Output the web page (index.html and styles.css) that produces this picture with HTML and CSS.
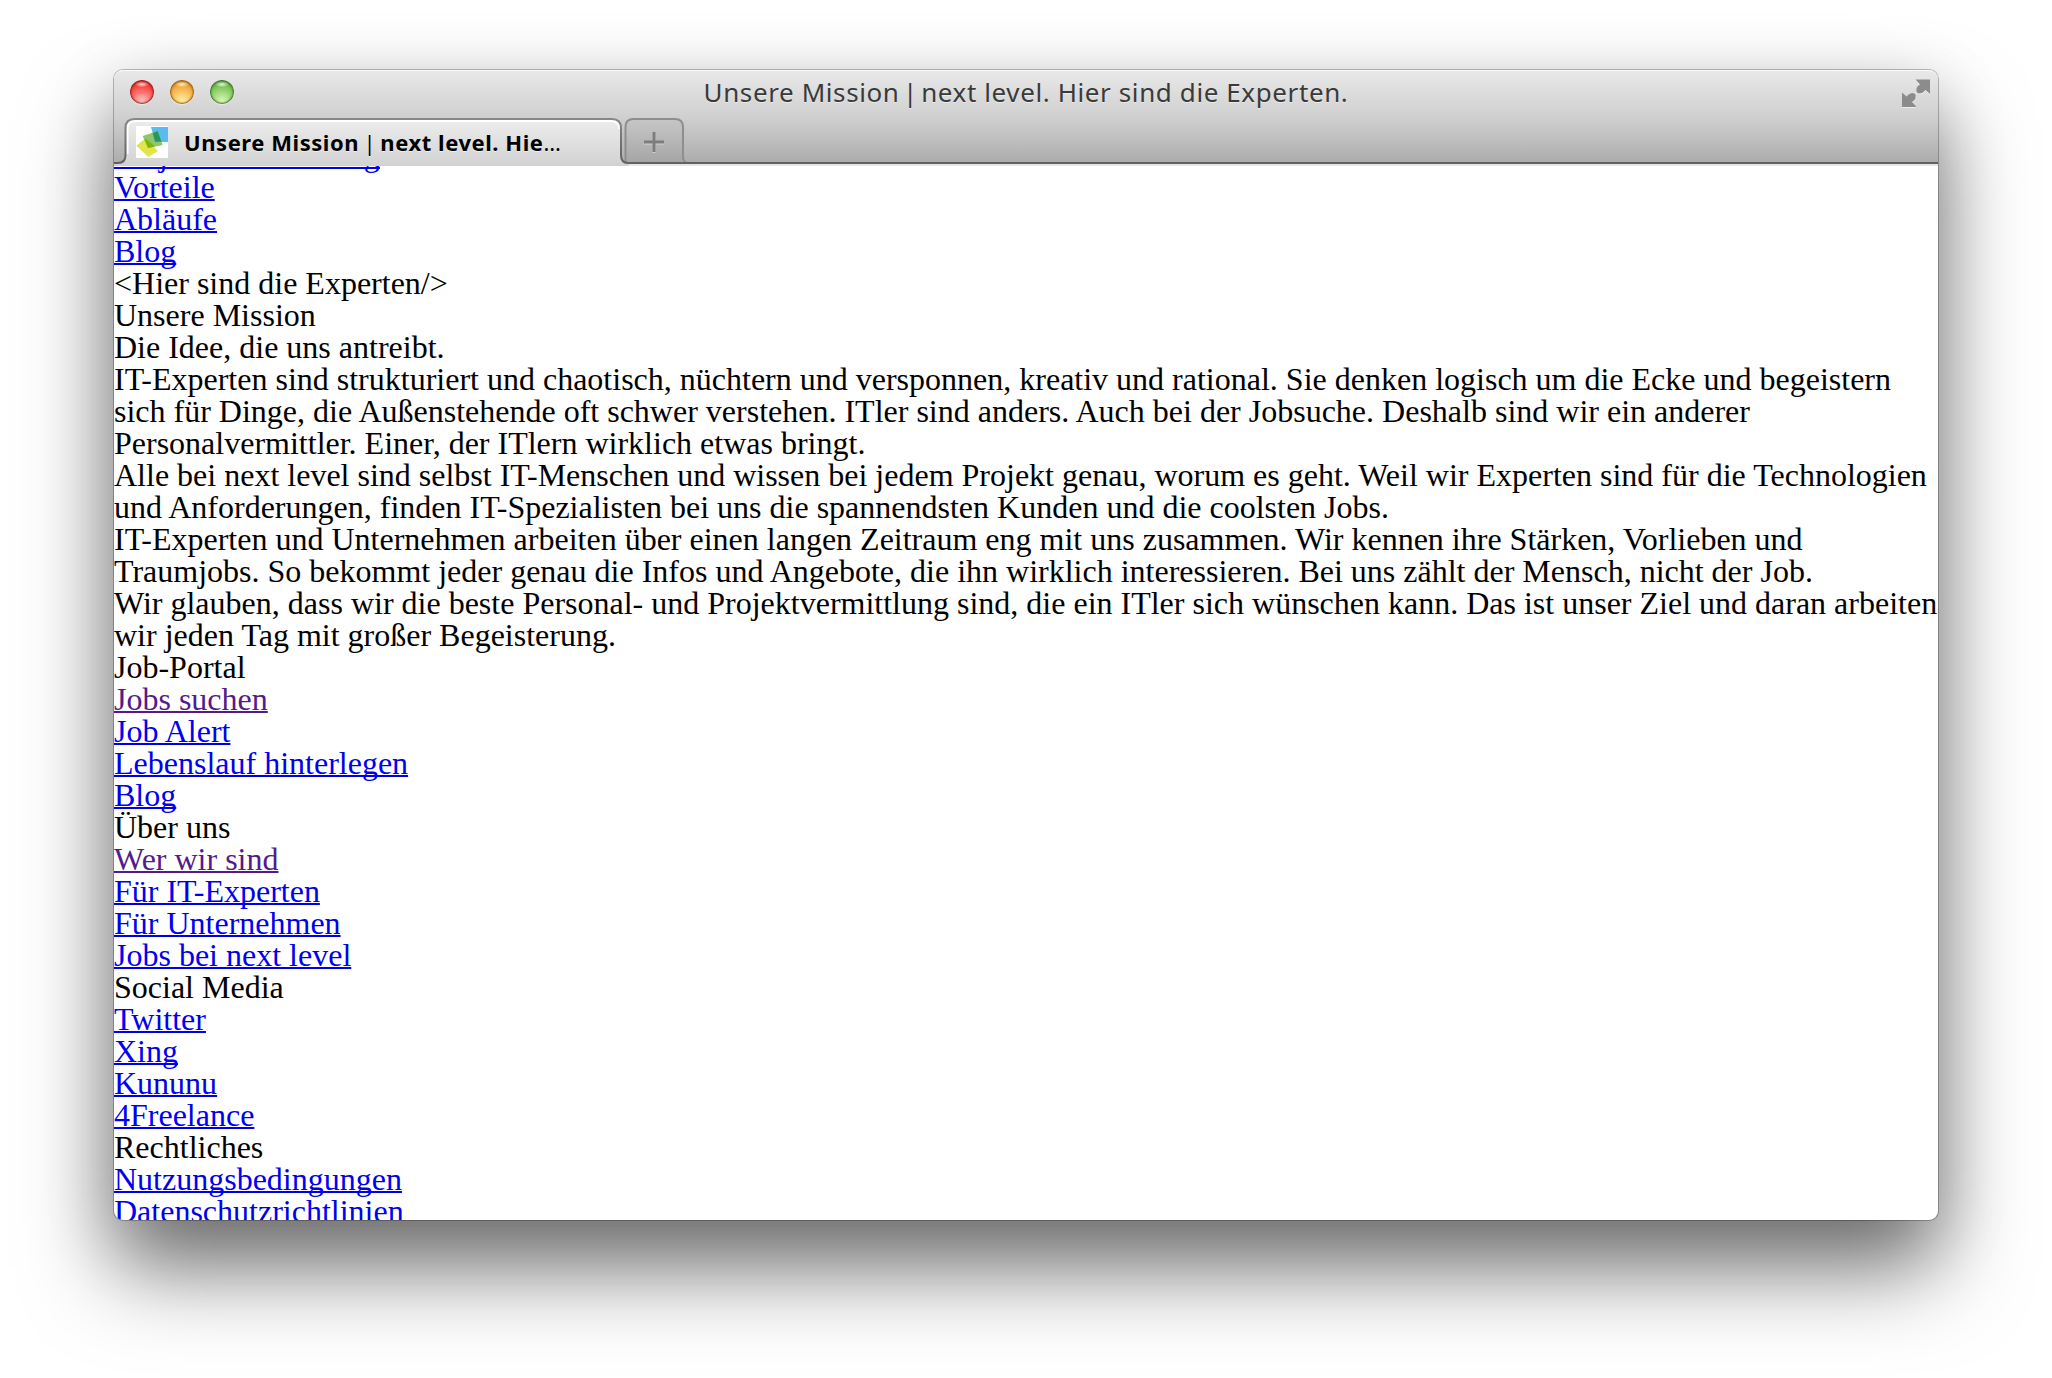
FILE: index.html
```html
<!DOCTYPE html>
<html lang="de">
<head>
<meta charset="utf-8">
<title>Unsere Mission | next level. Hier sind die Experten.</title>
<link rel="stylesheet" href="styles.css">
</head>
<body>
<div class="window">
  <header class="chrome">
    <svg class="chrome-lines" width="1824" height="96" viewBox="0 0 1824 96" fill="none">
      <defs>
        <linearGradient id="tab" x1="0" y1="49" x2="0" y2="96" gradientUnits="userSpaceOnUse"><stop offset="0" stop-color="#ededed"/><stop offset="1" stop-color="#d2d2d2"/></linearGradient>
        <linearGradient id="edge" x1="0" y1="48" x2="0" y2="94" gradientUnits="userSpaceOnUse"><stop offset="0" stop-color="#888"/><stop offset="1" stop-color="#606060"/></linearGradient>
      </defs>
      <path d="M0 94H1824V96H0Z" fill="#e6e6e6"/>
      <path d="M511.500 93V57Q511.500 49 519.500 49H561Q569 49 569 57V87Q569 93 575 93" fill="#000" fill-opacity=".035" stroke="#8e8e8e" stroke-width="2"/>
      <path d="M0 96V93H4Q12 93 12 85V58Q12 49 21 49H498Q507 49 507 58V85Q507 94 515 94V96Z" fill="url(#tab)"/>
      <path d="M13.500 84V59Q13.500 51 22 51H497Q505 51 505 59" stroke="#fff" stroke-width="2"/>
      <path d="M0 93H4Q11.500 93 11.500 85V58Q11.500 49 20.500 49H498Q507 49 507 58V85Q507 93 514 93H1824" stroke="url(#edge)" stroke-width="2"/>
    </svg>
    <div class="titlebar">
      <div class="lights">
        <span class="light red"></span><span class="light yellow"></span><span class="light green"></span>
      </div>
      <div class="title">Unsere Mission <span class="bar">|</span> next level. Hier sind die Experten.</div>
      <svg class="fullscreen" width="28" height="29" viewBox="0 0 28 29"><path d="M13.500 .5H28V15L23.500 11Q20.500 14.500 17 14.500Q13.500 13.500 14.500 10.500Q14 8 18 5.500ZM0 13.500L4.500 17.500Q7.500 14 11 14Q14.500 15 13.500 18Q14 20.500 10 23L14.500 28H0Z"/></svg>
    </div>
    <div class="tabs">
      <div class="tab">
        <svg width="32" height="32" viewBox="0 0 32 32">
          <path d="M0 0H32V32H0Z" fill="#fff"/>
          <path d="M15 1H32V16H19Z" fill="#58bdee"/>
          <path d="M.3 19.700L9 12.700L22 25L12.300 31Z" fill="#dfe54b"/>
          <path d="M6.700 10L21.700 5L26.700 19L12 22Z" fill="#8dc66c"/>
          <path d="M16.700 7L21.700 5L25.500 15.800H19Z" fill="#2c9460"/>
          <path d="M8.500 13.500L10 13L19 20.600L12 22Z" fill="#7fb400"/>
        </svg>
        <span class="tab-label">Unsere Mission <span class="bar">|</span> next level. Hie<span class="dots">…</span></span>
      </div>
      <svg class="plus" width="20" height="20" viewBox="0 0 20 20"><path d="M8.500 0H11.500V8.500H20V11.500H11.500V20H8.500V11.500H0V8.500H8.500Z"/></svg>
    </div>
  </header>
  <main class="page">
    <div class="scrolled">
      <ul>
        <li><a href="#" class="first">Projektbeschreibung</a></li>
        <li><a href="#">Vorteile</a></li>
        <li><a href="#">Abläufe</a></li>
        <li><a href="#">Blog</a></li>
      </ul>
      <p>&lt;Hier sind die Experten/&gt;</p>
      <h1>Unsere Mission</h1>
      <h2>Die Idee, die uns antreibt.</h2>
      <p>IT-Experten sind strukturiert und chaotisch, nüchtern und versponnen, kreativ und rational. Sie denken logisch um die Ecke und begeistern sich für Dinge, die Außenstehende oft schwer verstehen. ITler sind anders. Auch bei der Jobsuche. Deshalb sind wir ein anderer Personalvermittler. Einer, der ITlern wirklich etwas bringt.</p>
      <p>Alle bei next level sind selbst IT-Menschen und wissen bei jedem Projekt genau, worum es geht. Weil wir Experten sind für die Technologien und Anforderungen, finden IT-Spezialisten bei uns die spannendsten Kunden und die coolsten Jobs.</p>
      <p>IT-Experten und Unternehmen arbeiten über einen langen Zeitraum eng mit uns zusammen. Wir kennen ihre Stärken, Vorlieben und Traumjobs. So bekommt jeder genau die Infos und Angebote, die ihn wirklich interessieren. Bei uns zählt der Mensch, nicht der Job.</p>
      <p>Wir glauben, dass wir die beste Personal- und Projektvermittlung sind, die ein ITler sich wünschen kann. Das ist unser Ziel und daran arbeiten wir jeden Tag mit großer Begeisterung.</p>
      <h3>Job-Portal</h3>
      <ul>
        <li><a href="#" class="seen">Jobs suchen</a></li>
        <li><a href="#">Job Alert</a></li>
        <li><a href="#">Lebenslauf hinterlegen</a></li>
        <li><a href="#">Blog</a></li>
      </ul>
      <h3>Über uns</h3>
      <ul>
        <li><a href="#" class="seen">Wer wir sind</a></li>
        <li><a href="#">Für IT-Experten</a></li>
        <li><a href="#">Für Unternehmen</a></li>
        <li><a href="#">Jobs bei next level</a></li>
      </ul>
      <h3>Social Media</h3>
      <ul>
        <li><a href="#">Twitter</a></li>
        <li><a href="#">Xing</a></li>
        <li><a href="#">Kununu</a></li>
        <li><a href="#">4Freelance</a></li>
      </ul>
      <h3>Rechtliches</h3>
      <ul>
        <li><a href="#">Nutzungsbedingungen</a></li>
        <li><a href="#">Datenschutzrichtlinien</a></li>
      </ul>
    </div>
  </main>
</div>
</body>
</html>
```

FILE: styles.css
```css
* { box-sizing: border-box; }
html { height: 100%; overflow: hidden; background: #fff; }
body { margin: 0; height: 1378px; padding: 70px 114px 158px; overflow: hidden; }
.window {
  display: flex; flex-direction: column; width: 1824px; height: 1150px;
  border-radius: 9px; background: #fff;
  box-shadow: 0 0 0 1px rgba(0,0,0,.25), 0 20px 70px rgba(0,0,0,.18), 0 50px 88px rgba(0,0,0,.5);
}
.chrome {
  position: relative; flex: none; height: 96px; border-radius: 9px 9px 0 0;
  background: linear-gradient(#e9e9e9, #cfcfcf 50%, #ababab 94px);
  box-shadow: inset 0 2px 0 -1px #fafafa;
}
.chrome-lines { position: absolute; inset: 0; }
.titlebar { position: relative; display: flex; justify-content: space-between; height: 48px; padding: 9px 8px 0 16px; }
.lights { display: flex; gap: 16px; padding-top: 1px; width: 120px; }
.light { width: 24px; height: 24px; border-radius: 50%; }
.red { background: radial-gradient(ellipse 7px 3px at 50% 18%, #ffd9d6, transparent), radial-gradient(circle at 50% 90%, #ffc8c3, #fb4a45 60%, #c01c1c); box-shadow: inset 0 0 2px 1px #8c1a1a, 0 1px 1px rgba(255,255,255,.5); }
.yellow { background: radial-gradient(ellipse 7px 3px at 50% 18%, #ffeeca, transparent), radial-gradient(circle at 50% 90%, #fff4a8, #f3ad42 60%, #c27615); box-shadow: inset 0 0 2px 1px #8c5714, 0 1px 1px rgba(255,255,255,.5); }
.green { background: radial-gradient(ellipse 7px 3px at 50% 18%, #e3f7d5, transparent), radial-gradient(circle at 50% 90%, #dcfab8, #81c65d 60%, #479130); box-shadow: inset 0 0 2px 1px #356a26, 0 1px 1px rgba(255,255,255,.5); }
.title { margin-top: -1px; font: 26px/28px "Noto Sans", sans-serif; letter-spacing: .6px; color: #3a3a3a; white-space: nowrap; text-shadow: 0 1px 0 rgba(255,255,255,.5); }
.bar { margin: 0 -4px; font-weight: 400; }
.fullscreen { fill: #8c8c8c; filter: drop-shadow(0 1px 0 rgba(255,255,255,.6)); margin-left: 100px; }
.tabs { position: relative; display: flex; height: 48px; padding-left: 22px; }
.tab { display: flex; align-items: center; gap: 16px; width: 508px; height: 48px; }
.tab svg { position: relative; flex: none; }
.tab-label { padding-bottom: 1px; font: bold 22px/32px "Noto Sans", sans-serif; letter-spacing: .55px; color: #000; white-space: nowrap; text-shadow: 0 1px 0 rgba(255,255,255,.5); }
.tab-label .bar { margin: 0 -2px; }
.dots { font-weight: 400; }
.plus { margin-top: 14px; fill: #7d7d7d; filter: drop-shadow(0 1px 0 rgba(255,255,255,.4)); }
.page { flex: 1; min-height: 0; overflow: hidden; border-radius: 0 0 9px 9px; font: 32px/32px "Liberation Serif", serif; color: #000; }
.scrolled { margin-top: -27px; }
h1, h2, h3, p, ul { margin: 0; padding: 0; font: inherit; list-style: none; }
a { color: #00e; text-decoration: underline; text-decoration-skip-ink: none; text-decoration-thickness: 2px; }
.seen { color: #551a8b; }
.first { letter-spacing: .15px; }
```
